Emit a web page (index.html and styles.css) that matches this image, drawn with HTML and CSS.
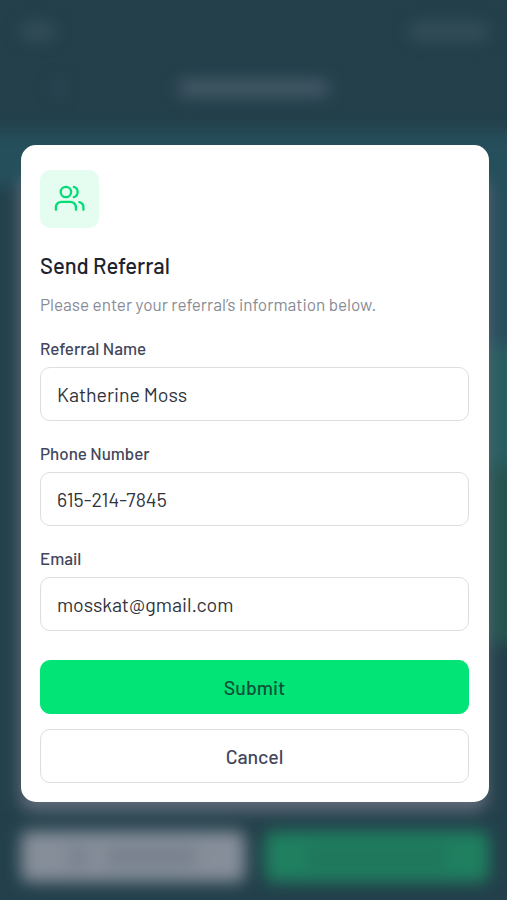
FILE: index.html
```
<!DOCTYPE html>
<html lang="en">
<head>
    <meta charset="UTF-8">
    <meta name="viewport" content="width=device-width, initial-scale=1.0">
    <title>Send Referral</title>
    <link rel="stylesheet" href="styles.css">
</head>
<body>
    <!-- App screen behind the modal -->
    <div class="screen" aria-hidden="true">
        <div class="status-bar">
            <span class="clock"></span>
            <span class="signal"></span>
        </div>
        <div class="nav-bar">
            <span class="back"></span>
            <span class="nav-title"></span>
        </div>
        <div class="content">
            <div class="card"></div>
        </div>
        <div class="actions">
            <div class="action"><i></i><span></span></div>
            <div class="action primary"><span></span></div>
        </div>
    </div>

    <div class="modal">
        <div class="modal-icon">
            <svg width="36" height="36" viewBox="0 0 36 36" fill="none" stroke="#05dc77" stroke-width="2.3" stroke-linecap="round">
                <circle cx="13.9" cy="11" r="5.2"/>
                <path d="M3.9 28.8v-2.5a5.5 5.5 0 0 1 5.5-5.5h9a5.5 5.5 0 0 1 5.5 5.5v2.5"/>
                <path d="M21.8 5.9a5.3 5.3 0 0 1 0 10.2"/>
                <path d="M27.4 21.1a5.5 5.5 0 0 1 4 5.3v2.4"/>
            </svg>
        </div>
        <h2>Send Referral</h2>
        <p class="hint">Please enter your referral’s information below.</p>
        <form id="referralForm">
            <label for="name">Referral Name</label>
            <input type="text" id="name" name="name" value="Katherine Moss">

            <label for="phone">Phone Number</label>
            <input type="text" id="phone" name="phone" value="615-214-7845">

            <label for="email">Email</label>
            <input type="text" id="email" name="email" value="mosskat@gmail.com">

            <button type="button" class="submit">Submit</button>
            <button type="button" class="cancel">Cancel</button>
        </form>
    </div>
</body>
</html>
```
FILE: styles.css
```
* {
    box-sizing: border-box;
}
body {
    margin: 0;
    height: 900px;
    overflow: hidden;
    padding: 145px 18.5px 0 20.5px;
    background-color: #23404b;
    font-family: Barlow, Roboto, sans-serif;
}

/* blurred background */
.screen {
    position: absolute;
    top: 0;
    left: 0;
    width: 507px;
    height: 900px;
    display: flex;
    flex-direction: column;
    filter: blur(8px);
}
.status-bar {
    display: flex;
    justify-content: space-between;
    align-items: center;
    height: 62px;
    padding: 0 18px 0 21px;
}
.clock {
    width: 34px;
    height: 17px;
    border-radius: 8px;
    background-color: #364f59;
}
.signal {
    width: 80px;
    height: 17px;
    border-radius: 8px;
    background-color: #364f59;
}
.nav-bar {
    display: flex;
    align-items: center;
    height: 52px;
    padding-left: 54px;
}
.back {
    width: 8px;
    height: 16px;
    background-color: #2e4a58;
}
.nav-title {
    width: 149px;
    height: 16px;
    margin-left: 117px;
    background-color: #475a69;
}
.content {
    height: 697px;
    margin: 17px -20px 0;
    padding: 45px 40px 0;
    background: linear-gradient(#254f5b 56px, transparent 56px),
        linear-gradient(90deg, #23404b 50%, transparent 50%),
        linear-gradient(#284e5d 214px, #285d60 214px, #285d60 330px, #25544f 340px, #25544f 512px, #23404b 512px);
}
.card {
    height: 635px;
    border-radius: 14px;
    background-color: #626c7b;
}
.actions {
    display: flex;
    gap: 20px;
    padding: 3px 18px 0 21px;
}
.action {
    flex: 1;
    display: flex;
    justify-content: center;
    align-items: center;
    gap: 20px;
    height: 51px;
    border-radius: 8px;
    background-color: #868e9a;
}
.action i {
    width: 16px;
    height: 18px;
    background-color: #767d8c;
}
.action span {
    width: 90px;
    height: 18px;
    background-color: #777f8d;
}
.action.primary {
    background-color: #1f8060;
}
.action.primary span {
    width: 140px;
    background-color: #1f745b;
}

/* modal */
.modal {
    position: relative;
    height: 657px;
    padding: 25px 19.5px 0;
    border-radius: 15px;
    background-color: #fff;
}
.modal-icon {
    display: flex;
    justify-content: center;
    align-items: center;
    width: 59px;
    height: 58px;
    border-radius: 10px;
    background-color: #e5fdf0;
}
h2 {
    margin: 22px 0 0;
    font-size: 22px;
    line-height: 30px;
    font-weight: 500;
    color: #20232e;
}
.hint {
    margin: 14px 0 0;
    font-size: 17.1px;
    line-height: 20px;
    color: #878b96;
}
form {
    display: flex;
    flex-direction: column;
    margin-top: 24px;
}
label {
    height: 20px;
    margin-bottom: 9px;
    font-size: 17px;
    line-height: 20px;
    font-weight: 500;
    color: #41465a;
}
input, button {
    height: 54px;
    border: 1.5px solid #dcdee1;
    border-radius: 10px;
    font-family: inherit;
    font-size: 19.6px;
    color: #30333d;
    background-color: #fff;
}
input {
    margin: 0 0 22px;
    padding: 0 16px;
}
button {
    margin: 0;
    padding: 0;
    font-weight: 500;
    color: #41465a;
}
.submit {
    margin: 7px 0 14.5px;
    border-color: #03e477;
    background-color: #03e477;
    color: #0d5138;
}
```
